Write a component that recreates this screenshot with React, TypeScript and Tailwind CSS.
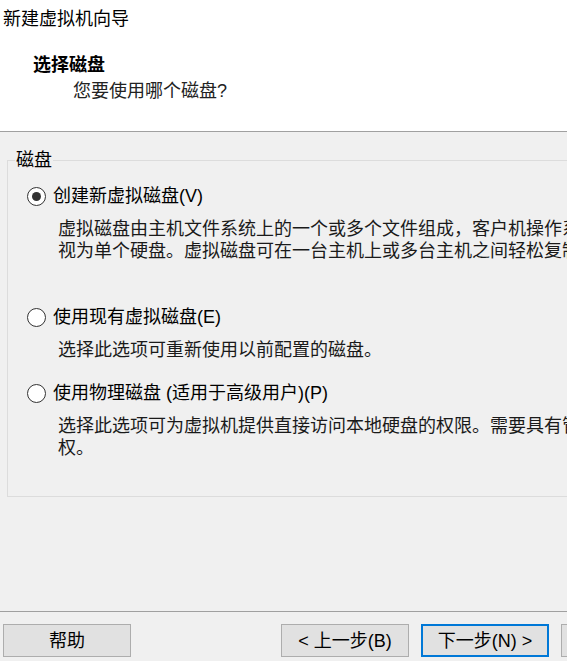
const font = "font-['Liberation_Sans','Noto_Sans_CJK_SC',sans-serif]"

function Radio({ checked }: { checked?: boolean }) {
  return (
    <span className="flex h-[19px] w-[19px] shrink-0 items-center justify-center rounded-full border border-[#333333] bg-white">
      {checked && <span className="h-[9px] w-[9px] rounded-full bg-[#333333]" />}
    </span>
  )
}

function Option({
  checked,
  label,
  lines,
  className,
}: {
  checked?: boolean
  label: string
  lines: string[]
  className?: string
}) {
  return (
    <div className={className}>
      <label className="flex h-[24px] items-center gap-[7px] whitespace-nowrap text-[18px] leading-[24px] text-black">
        <Radio checked={checked} />
        <span>{label}</span>
      </label>
      <div className="mt-[10px] pl-[31px] text-[18px] leading-[22px] text-[#1a1a1a]">
        {lines.map((l) => (
          <div key={l} className="whitespace-nowrap">
            {l}
          </div>
        ))}
      </div>
    </div>
  )
}

function Button({ children, primary }: { children: React.ReactNode; primary?: boolean }) {
  return (
    <button
      className={
        "h-[33px] w-[128px] shrink-0 bg-[#e1e1e1] text-[18px] leading-[24px] text-black " +
        (primary ? "border-2 border-[#0078d7]" : "border border-[#adadad]")
      }
    >
      {children}
    </button>
  )
}

export default function App() {
  return (
    <div className={`${font} flex h-[661px] w-[567px] flex-col overflow-hidden bg-[#f0f0f0]`}>
      {/* 顶部标题区 */}
      <div className="h-[132px] shrink-0 border-b border-[#a0a0a0] bg-white">
        <div className="pl-[3px] pt-[6px] text-[18px] leading-[26px] text-black">新建虚拟机向导</div>
        <div className="mt-[20px] pl-[33px] text-[18px] font-bold leading-[26px] text-black">选择磁盘</div>
        <div className="pl-[73px] text-[18px] leading-[26px] text-[#222222]">您要使用哪个磁盘?</div>
      </div>

      {/* 磁盘分组 */}
      <div className="h-[479px] shrink-0 pt-[16px]">
        <fieldset className="ml-[7px] h-[349px] w-[640px] border border-[#dcdcdc] pl-[19px] pt-[12px]">
          <legend className="ml-[-12px] px-[1px] text-[18px] leading-[24px] text-black">磁盘</legend>
          <Option
            checked
            label="创建新虚拟磁盘(V)"
            lines={[
              "虚拟磁盘由主机文件系统上的一个或多个文件组成，客户机操作系统会将其",
              "视为单个硬盘。虚拟磁盘可在一台主机上或多台主机之间轻松复制或移动。",
            ]}
          />
          <Option
            className="mt-[43px]"
            label="使用现有虚拟磁盘(E)"
            lines={["选择此选项可重新使用以前配置的磁盘。"]}
          />
          <Option
            className="mt-[20px]"
            label="使用物理磁盘 (适用于高级用户)(P)"
            lines={["选择此选项可为虚拟机提供直接访问本地硬盘的权限。需要具有管理员特", "权。"]}
          />
        </fieldset>
      </div>

      {/* 底部按钮 */}
      <div className="flex-1 border-t border-[#a0a0a0] pt-[12px]">
        <div className="flex w-[700px] pl-[3px]">
          <Button>帮助</Button>
          <div className="w-[150px] shrink-0" />
          <Button>&lt; 上一步(B)</Button>
          <div className="w-[12px] shrink-0" />
          <Button primary>下一步(N) &gt;</Button>
          <div className="w-[12px] shrink-0" />
          <Button>取消</Button>
        </div>
      </div>
    </div>
  )
}
